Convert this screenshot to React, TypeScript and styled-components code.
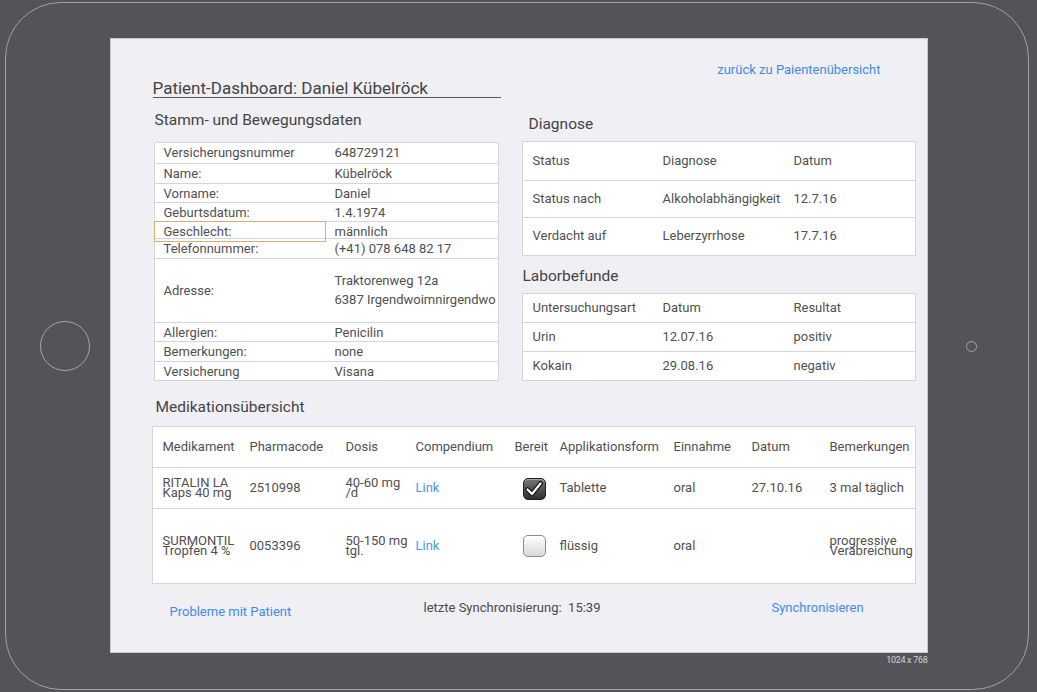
import React from "react";
import styled, { createGlobalStyle } from "styled-components";

const GlobalStyle = createGlobalStyle`
  html, body { margin: 0; padding: 0; background: #545358; }
  body { font-family: Roboto, "Noto Sans", Arial, sans-serif; }
  * { box-sizing: border-box; }
`;

const TEXT = "#505050";
const HEAD = "#444444";
const BLUE = "#3f8beb";
const LINE = "#d5d5da";

const Page = styled.div`
  width: 1037px;
  height: 692px;
  padding: 2px 8px 2px 5px;
  background: #545358;
`;

const Frame = styled.div`
  width: 1024px;
  height: 688px;
  border: 1.5px solid #a19fa5;
  border-radius: 56px;
  display: flex;
`;

const SideLeft = styled.div`
  width: 103.5px;
  display: flex;
  align-items: center;
  padding-left: 34px;
`;

const HomeButton = styled.div`
  width: 50px;
  height: 50px;
  border-radius: 50%;
  border: 1.5px solid #a6a5aa;
`;

const SideRight = styled.div`
  flex: 1;
  display: flex;
  align-items: center;
  padding-left: 38px;
`;

const Camera = styled.div`
  width: 11px;
  height: 11px;
  border-radius: 50%;
  border: 1.5px solid #a6a5aa;
`;

const ScreenColumn = styled.div`
  display: flex;
  flex-direction: column;
  padding-top: 34.5px;
`;

const Screen = styled.div`
  width: 818px;
  height: 615px;
  border: 1px solid #c8c8cd;
  background: #efeff4;
  padding: 22px 11px 0 41px;
  display: flex;
  flex-direction: column;
  color: ${TEXT};
`;

const SizeLabel = styled.div`
  align-self: flex-end;
  margin-top: 2px;
  font-size: 9px;
  letter-spacing: -0.3px;
  color: #d4d4d8;
`;

const TopLinkRow = styled.div`
  display: flex;
  justify-content: flex-end;
  padding-right: 35px;
  height: 18px;
  line-height: 18px;
`;

const TextLink = styled.a`
  color: ${BLUE};
  font-size: 13px;
  text-decoration: none;
  cursor: pointer;
`;

const UpperGrid = styled.div`
  display: grid;
  grid-template-columns: 350px 394px;
  column-gap: 20px;
  align-items: start;
`;

const Column = styled.div<{ $top?: number }>`
  display: flex;
  flex-direction: column;
  padding-top: ${(p) => p.$top ?? 0}px;
`;

const Title = styled.h1`
  margin: 0 0 0 1px;
  width: 348px;
  font-size: 17px;
  font-weight: 400;
  line-height: 18px;
  color: ${HEAD};
  border-bottom: 1px solid #5a5a5a;
`;

const SectionHeading = styled.h2<{ $mt: number; $ml: number; $mb: number }>`
  margin: ${(p) => p.$mt}px 0 ${(p) => p.$mb}px ${(p) => p.$ml}px;
  font-size: 15.5px;
  font-weight: 400;
  line-height: 18px;
  color: ${HEAD};
`;

const StammTable = styled.div`
  margin-left: 2px;
  width: 345px;
  background: #fff;
  border: 1px solid ${LINE};
`;

const StammRow = styled.div<{ $h: number }>`
  display: grid;
  grid-template-columns: 170px 1fr;
  height: ${(p) => p.$h}px;
  align-items: center;
  font-size: 13px;
  border-top: 1px solid ${LINE};
  &:first-child { border-top: none; }
`;

const StammLabel = styled.div<{ $focus?: boolean }>`
  height: 100%;
  display: flex;
  align-items: center;
  padding-left: 9px;
  outline: ${(p) => (p.$focus ? "1px solid #d5b074" : "none")};
`;

const StammValue = styled.div`
  padding-left: 10px;
  line-height: 19px;
`;

const DataTable = styled.div<{ $w: number }>`
  width: ${(p) => p.$w}px;
  background: #fff;
  border: 1px solid ${LINE};
`;

const DataRow = styled.div<{ $h: number; $cols: string }>`
  display: grid;
  grid-template-columns: ${(p) => p.$cols};
  height: ${(p) => p.$h}px;
  align-items: center;
  font-size: 13px;
  border-top: 1px solid ${LINE};
  &:first-child { border-top: none; }
`;

const Cell = styled.div<{ $tight?: boolean }>`
  padding-left: 10px;
  line-height: ${(p) => (p.$tight ? "10px" : "16px")};
  white-space: nowrap;
`;

const CellLink = styled.a`
  color: #4d93ec;
  text-decoration: none;
`;

const Check = styled.span<{ $on?: boolean }>`
  display: inline-flex;
  align-items: center;
  justify-content: center;
  margin-left: 18px;
  margin-top: 3px;
  width: 23px;
  height: 22px;
  border-radius: 5px;
  border: 1px solid ${(p) => (p.$on ? "#1e1e1e" : "#8c8c8c")};
  background: ${(p) =>
    p.$on
      ? "linear-gradient(#777777, #2f2f2f)"
      : "linear-gradient(#ffffff, #d9d9d9)"};
  box-shadow: inset 0 1px 0 rgba(255,255,255,0.35);
`;

const Footer = styled.div`
  display: grid;
  grid-template-columns: 272px 348px auto;
  margin-top: 16px;
  font-size: 13px;
  line-height: 16px;
  align-items: start;
`;

const FooterLink = styled(TextLink)<{ $pl?: number; $mt?: number }>`
  padding-left: ${(p) => p.$pl ?? 0}px;
  margin-top: ${(p) => p.$mt ?? 0}px;
`;

const SyncInfo = styled.span`
  color: #4a4a4a;
  white-space: pre;
`;

const CheckMark = () => (
  <svg width="18" height="16" viewBox="0 0 18 16">
    <polyline points="2.5,8.5 7,13 15.5,2.5" fill="none" stroke="#111" strokeWidth="4.5" strokeLinecap="round" strokeLinejoin="round" />
    <polyline points="2.5,8.5 7,13 15.5,2.5" fill="none" stroke="#fff" strokeWidth="2.2" strokeLinecap="round" strokeLinejoin="round" />
  </svg>
);

const stamm: { label: string; value: React.ReactNode; h: number; focus?: boolean }[] = [
  { label: "Versicherungsnummer", value: "648729121", h: 20 },
  { label: "Name:", value: "Kübelröck", h: 20 },
  { label: "Vorname:", value: "Daniel", h: 19 },
  { label: "Geburtsdatum:", value: "1.4.1974", h: 19 },
  { label: "Geschlecht:", value: "männlich", h: 17, focus: true },
  { label: "Telefonnummer:", value: "(+41) 078 648 82 17", h: 20 },
  {
    label: "Adresse:",
    value: (
      <>
        Traktorenweg 12a
        <br />
        6387 Irgendwoimnirgendwo
      </>
    ),
    h: 64,
  },
  { label: "Allergien:", value: "Penicilin", h: 19 },
  { label: "Bemerkungen:", value: "none", h: 20 },
  { label: "Versicherung", value: "Visana", h: 19 },
];

const smallCols = "130px 131px 1fr";
const medCols = "87px 96px 70px 99px 45px 114px 78px 78px 1fr";

export default function App() {
  return (
    <>
      <GlobalStyle />
      <Page>
        <Frame>
          <SideLeft>
            <HomeButton />
          </SideLeft>
          <ScreenColumn>
            <Screen>
              <TopLinkRow>
                <TextLink>zurück zu Paientenübersicht</TextLink>
              </TopLinkRow>
              <UpperGrid>
                <Column>
                  <Title>Patient-Dashboard: Daniel Kübelröck</Title>
                  <SectionHeading $mt={13} $ml={3} $mb={13}>
                    Stamm- und Bewegungsdaten
                  </SectionHeading>
                  <StammTable>
                    {stamm.map((r) => (
                      <StammRow key={r.label} $h={r.h}>
                        <StammLabel $focus={r.focus}>{r.label}</StammLabel>
                        <StammValue>{r.value}</StammValue>
                      </StammRow>
                    ))}
                  </StammTable>
                </Column>
                <Column $top={36}>
                  <SectionHeading $mt={0} $ml={7} $mb={8}>
                    Diagnose
                  </SectionHeading>
                  <DataTable $w={394}>
                    <DataRow $h={38} $cols={smallCols}>
                      <Cell>Status</Cell>
                      <Cell>Diagnose</Cell>
                      <Cell>Datum</Cell>
                    </DataRow>
                    <DataRow $h={37} $cols={smallCols}>
                      <Cell>Status nach</Cell>
                      <Cell>Alkoholabhängigkeit</Cell>
                      <Cell>12.7.16</Cell>
                    </DataRow>
                    <DataRow $h={38} $cols={smallCols}>
                      <Cell>Verdacht auf</Cell>
                      <Cell>Leberzyrrhose</Cell>
                      <Cell>17.7.16</Cell>
                    </DataRow>
                  </DataTable>
                  <SectionHeading $mt={11} $ml={1} $mb={8}>
                    Laborbefunde
                  </SectionHeading>
                  <DataTable $w={394}>
                    <DataRow $h={28} $cols={smallCols}>
                      <Cell>Untersuchungsart</Cell>
                      <Cell>Datum</Cell>
                      <Cell>Resultat</Cell>
                    </DataRow>
                    <DataRow $h={29} $cols={smallCols}>
                      <Cell>Urin</Cell>
                      <Cell>12.07.16</Cell>
                      <Cell>positiv</Cell>
                    </DataRow>
                    <DataRow $h={29} $cols={smallCols}>
                      <Cell>Kokain</Cell>
                      <Cell>29.08.16</Cell>
                      <Cell>negativ</Cell>
                    </DataRow>
                  </DataTable>
                </Column>
              </UpperGrid>
              <SectionHeading $mt={17} $ml={4} $mb={10}>
                Medikationsübersicht
              </SectionHeading>
              <DataTable $w={764}>
                <DataRow $h={40} $cols={medCols}>
                  <Cell>Medikament</Cell>
                  <Cell>Pharmacode</Cell>
                  <Cell>Dosis</Cell>
                  <Cell>Compendium</Cell>
                  <Cell>Bereit</Cell>
                  <Cell>Applikationsform</Cell>
                  <Cell>Einnahme</Cell>
                  <Cell>Datum</Cell>
                  <Cell>Bemerkungen</Cell>
                </DataRow>
                <DataRow $h={41} $cols={medCols}>
                  <Cell $tight>
                    RITALIN LA
                    <br />
                    Kaps 40 mg
                  </Cell>
                  <Cell>2510998</Cell>
                  <Cell $tight>
                    40-60 mg
                    <br />
                    /d
                  </Cell>
                  <Cell>
                    <CellLink>Link</CellLink>
                  </Cell>
                  <div>
                    <Check $on>
                      <CheckMark />
                    </Check>
                  </div>
                  <Cell>Tablette</Cell>
                  <Cell>oral</Cell>
                  <Cell>27.10.16</Cell>
                  <Cell>3 mal täglich</Cell>
                </DataRow>
                <DataRow $h={75} $cols={medCols}>
                  <Cell $tight>
                    SURMONTIL
                    <br />
                    Tropfen 4 %
                  </Cell>
                  <Cell>0053396</Cell>
                  <Cell $tight>
                    50-150 mg
                    <br />
                    tgl.
                  </Cell>
                  <Cell>
                    <CellLink>Link</CellLink>
                  </Cell>
                  <div>
                    <Check />
                  </div>
                  <Cell>flüssig</Cell>
                  <Cell>oral</Cell>
                  <Cell></Cell>
                  <Cell $tight>
                    progressive
                    <br />
                    Verabreichung
                  </Cell>
                </DataRow>
              </DataTable>
              <Footer>
                <FooterLink $pl={18} $mt={4}>Probleme mit Patient</FooterLink>
                <SyncInfo>letzte Synchronisierung:  15:39</SyncInfo>
                <FooterLink>Synchronisieren</FooterLink>
              </Footer>
            </Screen>
            <SizeLabel>1024 x 768</SizeLabel>
          </ScreenColumn>
          <SideRight>
            <Camera />
          </SideRight>
        </Frame>
      </Page>
    </>
  );
}
